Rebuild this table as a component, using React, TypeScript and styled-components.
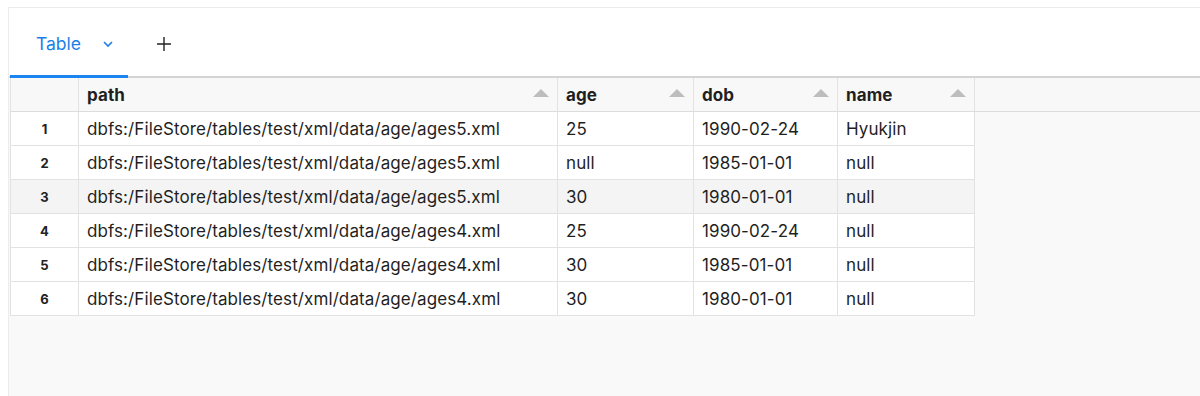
import { createGlobalStyle, styled } from "styled-components";

const GlobalStyle = createGlobalStyle`
  html, body {
    margin: 0;
    background: #ffffff;
  }
  body {
    font-family: Inter, "Helvetica Neue", Arial, sans-serif;
    color: #1f1f1f;
  }
`;

const columns = [
  { key: "path", width: 479 },
  { key: "age", width: 136 },
  { key: "dob", width: 144 },
  { key: "name", width: 137 },
];

const rows = [
  ["dbfs:/FileStore/tables/test/xml/data/age/ages5.xml", "25", "1990-02-24", "Hyukjin"],
  ["dbfs:/FileStore/tables/test/xml/data/age/ages5.xml", "null", "1985-01-01", "null"],
  ["dbfs:/FileStore/tables/test/xml/data/age/ages5.xml", "30", "1980-01-01", "null"],
  ["dbfs:/FileStore/tables/test/xml/data/age/ages4.xml", "25", "1990-02-24", "null"],
  ["dbfs:/FileStore/tables/test/xml/data/age/ages4.xml", "30", "1985-01-01", "null"],
  ["dbfs:/FileStore/tables/test/xml/data/age/ages4.xml", "30", "1980-01-01", "null"],
];

export default function App() {
  return (
    <>
      <GlobalStyle />
      <Frame>
        <TabBar>
          <Tab>
            Table
            <svg width="12" height="8" viewBox="0 0 12 8">
              <path d="M2 2l4 4 4-4" fill="none" stroke="#1a7fe6" strokeWidth="1.6" />
            </svg>
          </Tab>
          <AddButton>
            <svg width="16" height="16" viewBox="0 0 16 16">
              <path d="M8 1v14M1 8h14" stroke="#222" strokeWidth="1.4" />
            </svg>
          </AddButton>
        </TabBar>
        <Grid>
          <HeaderRow>
            <IndexCell />
            {columns.map((c) => (
              <HeadCell key={c.key} $width={c.width}>
                {c.key}
                <SortArrow />
              </HeadCell>
            ))}
            <Filler />
          </HeaderRow>
          {rows.map((r, i) => (
            <Row key={i} $hover={i === 2}>
              <IndexCell>{i + 1}</IndexCell>
              {r.map((v, j) => (
                <Cell key={j} $width={columns[j].width}>
                  {v}
                </Cell>
              ))}
            </Row>
          ))}
        </Grid>
      </Frame>
    </>
  );
}

const Frame = styled.div`
  margin: 7px 0 0 8px;
  height: 389px;
  border-top: 1px solid #ececec;
  border-left: 1px solid #ececec;
  display: flex;
  flex-direction: column;
`;

const TabBar = styled.div`
  height: 68px;
  padding-left: 1px;
  display: flex;
  align-items: stretch;
  border-bottom: 2px solid #d4d4d4;
`;

const Tab = styled.div`
  width: 118px;
  box-sizing: border-box;
  padding: 4px 0 0 26px;
  display: flex;
  align-items: center;
  gap: 21px;
  color: #1a7fe6;
  font-size: 17.5px;
  border-bottom: 3px solid #1a84f0;
  margin-bottom: -2px;
`;

const AddButton = styled.div`
  display: flex;
  align-items: center;
  padding: 4px 0 0 28px;
`;

const Grid = styled.div`
  flex: 1;
  background: #f9f9f9;
  padding-left: 1px;
`;

const HeaderRow = styled.div`
  display: flex;
  height: 33px;
  border-bottom: 1px solid #dcdcdc;
  background: #f8f8f8;
`;

const Row = styled.div<{ $hover?: boolean }>`
  display: flex;
  height: 33px;
  width: fit-content;
  border-bottom: 1px solid #e2e2e2;
  background: ${(p) => (p.$hover ? "#f4f4f4" : "#ffffff")};
`;

const IndexCell = styled.div`
  width: 69px;
  box-sizing: border-box;
  border-left: 1px solid #e2e2e2;
  border-right: 1px solid #e2e2e2;
  display: flex;
  align-items: center;
  justify-content: center;
  font-size: 13px;
  font-weight: 700;
  color: #222;
`;

const Cell = styled.div<{ $width: number }>`
  width: ${(p) => p.$width}px;
  box-sizing: border-box;
  padding-left: 8px;
  border-right: 1px solid #e2e2e2;
  display: flex;
  align-items: center;
  font-size: 17px;
  letter-spacing: 0.1px;
  color: #1f1f1f;
`;

const HeadCell = styled(Cell)`
  font-weight: 700;
  justify-content: space-between;
  padding-right: 8px;
  background: #f8f8f8;
`;

const SortArrow = styled.span`
  width: 0;
  height: 0;
  border-left: 8px solid transparent;
  border-right: 8px solid transparent;
  border-bottom: 8px solid #bdbdbd;
  margin-top: -4px;
`;

const Filler = styled.div`
  flex: 1;
`;
